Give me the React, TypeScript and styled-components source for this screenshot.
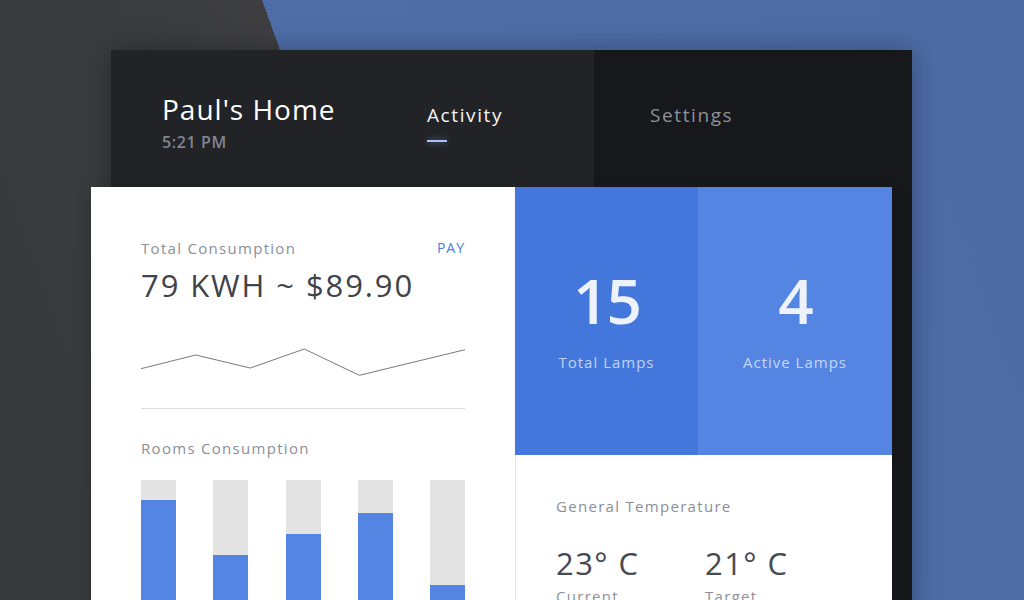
import React from "react";
import styled, { createGlobalStyle } from "styled-components";

const GlobalStyle = createGlobalStyle`
  html, body {
    margin: 0;
    padding: 0;
    height: 100%;
    overflow: hidden;
  }
  body {
    font-family: "Open Sans", "Noto Sans", sans-serif;
  }
  * {
    box-sizing: border-box;
  }
`;

const Page = styled.div`
  height: 100vh;
  overflow: hidden;
  padding: 50px 0 0 111px;
  background: linear-gradient(
    70.3deg,
    #37383a 0%,
    #3b3c3e 30%,
    #3f3f41 38.5%,
    #4f6ea8 38.5%,
    #4c6ba5 100%
  );
`;

const Panel = styled.div`
  width: 801px;
  background: #17181b;
  box-shadow: 0 0 26px rgba(0, 0, 0, 0.3);
  display: flex;
  flex-direction: column;
`;

const Header = styled.div`
  display: flex;
  height: 137px;
`;

const HeaderMain = styled.div`
  width: 483px;
  display: flex;
  padding-left: 51px;
  background: rgba(35, 37, 40, 0.9);
`;

const Brand = styled.div`
  width: 265px;
  padding-top: 42px;
`;

const HomeName = styled.div`
  font-size: 28px;
  line-height: 34px;
  font-weight: 500;
  color: #ffffff;
  letter-spacing: 1px;
`;

const Clock = styled.div`
  margin-top: 6px;
  font-size: 16px;
  line-height: 20px;
  font-weight: 600;
  color: #7f8591;
  letter-spacing: 0.6px;
`;

const Tab = styled.div<{ $active?: boolean }>`
  padding-top: 53px;
  font-size: 19px;
  line-height: 24px;
  letter-spacing: 1.6px;
  color: ${(p) => (p.$active ? "#f2f4f8" : "#8d9099")};
`;

const TabMark = styled.div`
  margin-top: 13px;
  width: 20px;
  height: 2px;
  background: #a9c3f7;
  box-shadow: 0 0 6px rgba(120, 160, 255, 0.7);
`;

const HeaderSide = styled.div`
  flex: 1;
  display: flex;
  padding-left: 56px;
  background: #17181b;
`;

const Card = styled.div`
  margin-left: -20px;
  margin-right: 20px;
  height: 440px;
  background: #ffffff;
  display: flex;
  box-shadow: 0 4px 16px rgba(0, 0, 0, 0.12);
`;

const LeftColumn = styled.div`
  width: 424px;
  padding: 51px 50px 0;
`;

const RightColumn = styled.div`
  flex: 1;
  display: flex;
  flex-direction: column;
`;

const LabelRow = styled.div`
  display: flex;
  justify-content: space-between;
  align-items: center;
`;

const Label = styled.div`
  font-size: 15px;
  line-height: 20px;
  color: #8a8f99;
  letter-spacing: 1.3px;
`;

const PayLink = styled.a`
  font-size: 14px;
  line-height: 20px;
  color: #4a7fe0;
  letter-spacing: 1px;
  text-decoration: none;
`;

const BigValue = styled.div`
  margin-top: 7px;
  font-size: 31px;
  line-height: 40px;
  color: #3f434a;
  letter-spacing: 1.9px;
`;

const Spark = styled.svg`
  display: block;
  margin-top: 35px;
  width: 324px;
  height: 45px;
`;

const Divider = styled.div`
  margin-top: 23px;
  height: 1px;
  background: #dcdcdc;
`;

const SectionLabel = styled(Label)`
  margin-top: 29px;
`;

const Bars = styled.div`
  margin-top: 22px;
  display: flex;
  justify-content: space-between;
`;

const Bar = styled.div<{ $fill: number }>`
  width: 35px;
  height: 160px;
  background: #e4e4e4;
  display: flex;
  flex-direction: column;
  justify-content: flex-end;

  &::after {
    content: "";
    display: block;
    height: ${(p) => p.$fill}px;
    background: #5585e3;
  }
`;

const Tiles = styled.div`
  display: flex;
  height: 268px;
`;

const Tile = styled.div<{ $width: number; $tone: string }>`
  width: ${(p) => p.$width}px;
  background: ${(p) => p.$tone};
  display: flex;
  flex-direction: column;
  align-items: center;
  padding-top: 78px;
`;

const TileNumber = styled.div`
  font-size: 62px;
  line-height: 70px;
  font-weight: 600;
  letter-spacing: -2px;
  color: #eef2fb;
`;

const TileLabel = styled.div`
  margin-top: 17px;
  font-size: 15px;
  line-height: 20px;
  letter-spacing: 1px;
  color: rgba(235, 241, 253, 0.75);
`;

const Temperature = styled.div`
  flex: 1;
  padding: 41px 0 0 40px;
  border-left: 1px solid #e6e6e6;
`;

const Readings = styled.div`
  display: flex;
  margin-top: 27px;
`;

const Reading = styled.div`
  width: 149px;
`;

const Degrees = styled.div`
  font-size: 31px;
  line-height: 40px;
  color: #464a52;
  letter-spacing: 1.4px;
`;

const ReadingLabel = styled(Label)`
  margin-top: 3px;
`;

const rooms = [140, 85, 106, 127, 55];

const sparkPoints = "0,28.7 54.7,15 109.3,28 163.3,9 218.3,35.3 324,9.7";

export default function App() {
  return (
    <Page>
      <GlobalStyle />
      <Panel>
        <Header>
          <HeaderMain>
            <Brand>
              <HomeName>Paul's Home</HomeName>
              <Clock>5:21 PM</Clock>
            </Brand>
            <Tab $active>
              Activity
              <TabMark />
            </Tab>
          </HeaderMain>
          <HeaderSide>
            <Tab>Settings</Tab>
          </HeaderSide>
        </Header>

        <Card>
          <LeftColumn>
            <LabelRow>
              <Label>Total Consumption</Label>
              <PayLink href="#">PAY</PayLink>
            </LabelRow>
            <BigValue>79 KWH ~ $89.90</BigValue>
            <Spark viewBox="0 0 324 45">
              <polyline
                points={sparkPoints}
                fill="none"
                stroke="#7a7a7a"
                strokeWidth="1"
              />
            </Spark>
            <Divider />
            <SectionLabel>Rooms Consumption</SectionLabel>
            <Bars>
              {rooms.map((fill, i) => (
                <Bar key={i} $fill={fill} />
              ))}
            </Bars>
          </LeftColumn>

          <RightColumn>
            <Tiles>
              <Tile $width={183} $tone="#4477db">
                <TileNumber>15</TileNumber>
                <TileLabel>Total Lamps</TileLabel>
              </Tile>
              <Tile $width={194} $tone="#5585e3">
                <TileNumber>4</TileNumber>
                <TileLabel>Active Lamps</TileLabel>
              </Tile>
            </Tiles>
            <Temperature>
              <Label>General Temperature</Label>
              <Readings>
                <Reading>
                  <Degrees>23° C</Degrees>
                  <ReadingLabel>Current</ReadingLabel>
                </Reading>
                <Reading>
                  <Degrees>21° C</Degrees>
                  <ReadingLabel>Target</ReadingLabel>
                </Reading>
              </Readings>
            </Temperature>
          </RightColumn>
        </Card>
      </Panel>
    </Page>
  );
}
